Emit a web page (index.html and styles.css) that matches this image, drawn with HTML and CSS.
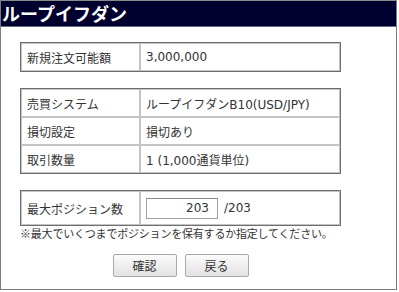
FILE: index.html
```html
<!DOCTYPE html>
<html lang="ja">
<head>
<meta charset="utf-8">
<title>ループイフダン</title>
<link rel="stylesheet" href="styles.css">
</head>
<body>
<div class="frame">
  <div class="title">ループイフダン</div>
  <div class="content">
    <table class="info first">
      <tr><td class="label">新規注文可能額</td><td>3,000,000</td></tr>
    </table>
    <table class="info">
      <tr><td class="label">売買システム</td><td>ループイフダンB10(USD/JPY)</td></tr>
      <tr><td class="label">損切設定</td><td>損切あり</td></tr>
      <tr><td class="label">取引数量</td><td>1 (1,000通貨単位)</td></tr>
    </table>
    <table class="info tall">
      <tr><td class="label">最大ポジション数</td><td><input class="num" type="text" value="203"><span class="max">/203</span></td></tr>
    </table>
    <p class="note">※最大でいくつまでポジションを保有するか指定してください。</p>
    <div class="buttons">
      <button class="btn" type="button">確認</button>
      <button class="btn" type="button">戻る</button>
    </div>
  </div>
</div>
</body>
</html>
```
FILE: styles.css
```css
html, body {
  margin: 0;
  padding: 0;
  background: #ffffff;
}
body {
  font-family: "DejaVu Sans", "Noto Sans CJK JP", sans-serif;
  font-size: 12px;
  color: #333333;
}
.frame {
  box-sizing: border-box;
  width: 397px;
  height: 290px;
  border: 1px solid #7c7c7c;
  border-top-color: #8a8a8a;
}
.title {
  height: 25px;
  background: #00002e;
  color: #ffffff;
  font-family: "Noto Sans CJK JP", sans-serif;
  font-weight: bold;
  font-size: 18px;
  line-height: 25px;
  padding-left: 1px;
  border-bottom: 1px solid #6a6a80;
}
.content {
  width: 321px;
  margin-left: 19px;
  padding-top: 15px;
}
.info {
  width: 321px;
  border-collapse: separate;
  border-spacing: 0;
  border: 1px solid #6e6e6e;
  margin-bottom: 16px;
}
.info td {
  border: 1px solid #c4c4c4;
  height: 26px;
  padding: 0 0 0 5px;
  vertical-align: middle;
  white-space: nowrap;
}
.info td.label {
  width: 112px;
}
.info.tall {
  margin-bottom: 0;
}
.info.tall td {
  height: 32px;
}
.num {
  box-sizing: border-box;
  width: 72px;
  height: 21px;
  border: 1px solid #a0a0a0;
  border-top-color: #8a8a8a;
  padding: 0 8px 0 2px;
  text-align: right;
  font-family: "DejaVu Sans", sans-serif;
  font-size: 12px;
  color: #333333;
  vertical-align: middle;
  margin: 0;
}
.max {
  margin-left: 6px;
  vertical-align: middle;
}
.note {
  margin: 0;
  font-family: "Noto Sans CJK JP", sans-serif;
  font-size: 11px;
  line-height: 14px;
  letter-spacing: -0.2px;
  white-space: nowrap;
}
.buttons {
  display: flex;
  justify-content: center;
  gap: 8px;
  margin-top: 14px;
}
.btn {
  box-sizing: border-box;
  width: 64px;
  height: 23px;
  border: 1px solid #a8a8a8;
  border-radius: 2px;
  background: linear-gradient(#fbfbfb, #e2e2e2);
  font-family: "Noto Sans CJK JP", sans-serif;
  font-size: 12px;
  color: #333333;
  padding: 0;
}
```
